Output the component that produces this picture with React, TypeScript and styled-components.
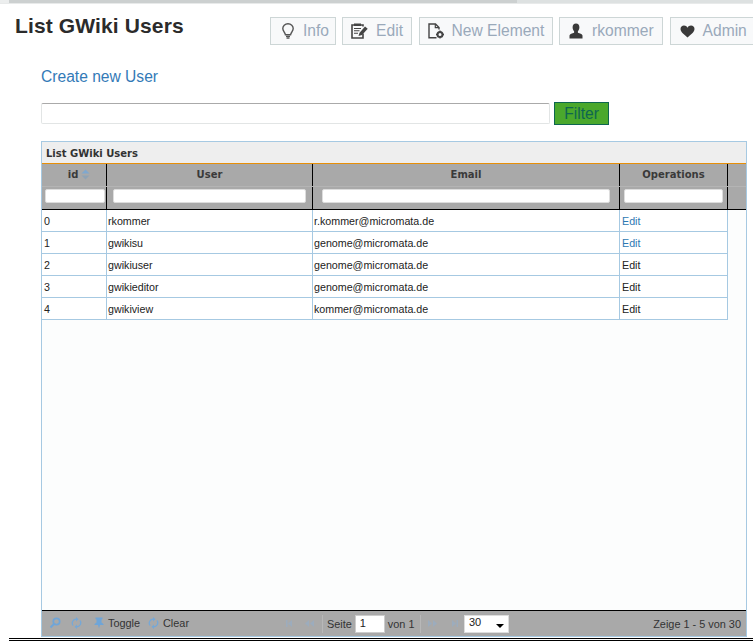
import styled, { createGlobalStyle } from "styled-components";
import { ReactNode } from "react";

const GlobalStyle = createGlobalStyle`
  html, body {
    margin: 0;
    padding: 0;
    background: #fff;
    font-family: "Liberation Sans", Arial, sans-serif;
    overflow: hidden;
  }
`;

const Page = styled.div`
  width: 753px;
  height: 641px;
  overflow: hidden;
  display: flex;
  flex-direction: column;
`;

const TopStrip = styled.div`
  height: 4px;
  box-sizing: border-box;
  flex: none;
  border-bottom: 1px solid #e8eaea;
  background: linear-gradient(
    to right,
    #eceeee 0,
    #eceeee 9px,
    #ccd0d0 9px,
    #ccd0d0 517px,
    #dde1e1 517px
  );
`;

const Header = styled.div`
  display: flex;
  justify-content: space-between;
  height: 27px;
  padding: 13px 0 0 15px;
  flex: none;
`;

const Title = styled.h1`
  margin: 0;
  font-size: 21px;
  line-height: 18px;
  font-weight: 700;
  letter-spacing: 0.13px;
  color: #2b2b2b;
  white-space: nowrap;
`;

const Nav = styled.div`
  display: flex;
  gap: 6.5px;
  width: 483px;
  flex: none;
`;

const NavButton = styled.a<{ $w: number; $pad: number }>`
  box-sizing: border-box;
  width: ${(p) => p.$w}px;
  height: 28px;
  flex: none;
  display: flex;
  align-items: center;
  gap: 8px;
  padding-left: ${(p) => p.$pad}px;
  background: #f8f9fa;
  border: 1px solid #cdd6d6;
  color: #9aa9ba;
  font-size: 15.6px;
  white-space: nowrap;
`;

const Content = styled.div`
  display: flex;
  flex-direction: column;
  padding: 24px 6px 0 41px;
  flex: 1;
  min-height: 0;
`;

const CreateLink = styled.a`
  font-size: 15.6px;
  line-height: 18px;
  color: #337ab7;
`;

const FilterRow = styled.div`
  display: flex;
  align-items: center;
  gap: 4px;
  margin-top: 16px;
  height: 23px;
`;

const FilterInput = styled.input`
  box-sizing: border-box;
  width: 509px;
  height: 21px;
  margin: 0;
  background: #fff;
  border: 1px solid #e2e5e5;
  border-top-color: #aaa;
  border-radius: 2px;
`;

const FilterButton = styled.button`
  box-sizing: border-box;
  width: 55px;
  height: 23px;
  padding: 0;
  background: #4aa82c;
  border: 1px solid #0e6650;
  color: #0e6650;
  font-family: "Liberation Sans", Arial, sans-serif;
  font-size: 15.6px;
`;

const Grid = styled.div`
  box-sizing: border-box;
  height: 496px;
  margin-top: 16px;
  display: flex;
  flex-direction: column;
  border: 1px solid #a6c9e2;
  background: #fcfdfd;
`;

const Caption = styled.div`
  height: 22px;
  flex: none;
  box-sizing: border-box;
  padding: 5px 0 0 4px;
  background: #eee;
  border-bottom: 1px solid #e78f08;
  font-family: "DejaVu Sans", Verdana, sans-serif;
  font-size: 10px;
  font-weight: 700;
  line-height: 13px;
  color: #333;
`;

const HeadBlock = styled.div`
  flex: none;
  background: #a9a9a9;
  border-bottom: 1px solid #000;
`;

const HeadRow = styled.div<{ $h: number; $rule?: boolean }>`
  display: grid;
  grid-template-columns: 65px 206px 307px 108px 1fr;
  height: ${(p) => p.$h}px;
  box-sizing: border-box;
  border-bottom: ${(p) => (p.$rule ? "1px solid #b4b4b4" : "0")};
`;

const HeadCell = styled.div<{ $offset?: number }>`
  box-sizing: border-box;
  display: flex;
  align-items: center;
  justify-content: center;
  gap: 3px;
  border-right: 1px solid #000;
  font-family: "DejaVu Sans", Verdana, sans-serif;
  font-size: 10px;
  font-weight: 700;
  color: #3a3a3a;
  padding: 0 0 1px ${(p) => p.$offset ?? 0}px;

  &:last-child {
    border-right: 0;
  }
`;

const FilterCell = styled.div<{ $left: number; $right: number }>`
  box-sizing: border-box;
  display: flex;
  align-items: center;
  border-right: 1px solid #000;
  padding: 0 ${(p) => p.$right}px 4px ${(p) => p.$left}px;

  &:last-child {
    border-right: 0;
  }
`;

const SearchBox = styled.input`
  box-sizing: border-box;
  display: block;
  width: 100%;
  height: 14px;
  margin: 0;
  padding: 0;
  background: #fff;
  border: 1px solid #ddd;
  border-radius: 2px;
`;

const Body = styled.div`
  flex: 1;
  min-height: 0;
`;

const Row = styled.div`
  display: grid;
  grid-template-columns: 65px 206px 307px 107px;
  width: 686px;
  height: 22px;
  box-sizing: border-box;
  background: #fff;
  border-bottom: 1px solid #a6c9e2;
  border-right: 1px solid #a6c9e2;
`;

const Cell = styled.div<{ $pad: number }>`
  box-sizing: border-box;
  padding: 2px 0 0 ${(p) => p.$pad}px;
  border-right: 1px solid #a6c9e2;
  font-size: 10.7px;
  line-height: 18px;
  color: #222;
  white-space: nowrap;

  &:last-child {
    border-right: 0;
  }
`;

const EditLink = styled.a<{ $linked: boolean }>`
  color: ${(p) => (p.$linked ? "#2e78b2" : "#222")};
`;

const Pager = styled.div`
  flex: none;
  height: 26px;
  box-sizing: border-box;
  display: grid;
  grid-template-columns: 240px 1fr 150px;
  align-items: center;
  background: #a9a9a9;
  border-top: 1px solid #000;
  font-size: 10.9px;
  color: #333;
`;

const PagerLeft = styled.div`
  display: flex;
  align-items: center;
  padding: 0 0 2px 7px;
`;

const ToolItem = styled.span<{ $w: number }>`
  width: ${(p) => p.$w}px;
  display: flex;
  align-items: center;
  gap: 4px;
  flex: none;
`;

const PagerCenter = styled.div`
  display: flex;
  align-items: center;
  margin-left: -0.5px;
`;

const Divider = styled.span`
  width: 1px;
  height: 18px;
  background: #b8b8b8;
  margin: 0 1px 0 2.5px;
`;

const PageLabel = styled.span`
  margin: 0 3px;
`;

const PageInput = styled.div`
  box-sizing: border-box;
  width: 30px;
  height: 18px;
  padding: 1px 0 0 4px;
  background: #fff;
  border: 1px solid #ccc;
  font-size: 11px;
  color: #222;
`;

const SizeSelect = styled.div`
  box-sizing: border-box;
  position: relative;
  width: 45px;
  height: 18px;
  padding: 0 0 0 4px;
  background: #fff;
  border: 1px solid #ddd;
  font-size: 11px;
  line-height: 12px;
  color: #222;
`;

const SelectArrow = styled.span`
  position: absolute;
  right: 4px;
  top: 8px;
  border-left: 4px solid transparent;
  border-right: 4px solid transparent;
  border-top: 4px solid #000;
`;

const PagerRight = styled.div`
  text-align: right;
  padding-right: 5px;
`;

const BottomRules = styled.div`
  flex: none;
  height: 3px;
  margin-left: 9px;
  box-sizing: border-box;
  border-top: 1px solid #000;
  border-bottom: 1px solid #000;
`;

const SeekSvg = styled.svg<{ $m: number; $flip: boolean }>`
  flex: none;
  margin: 0 ${(p) => p.$m}px;
  transform: ${(p) => (p.$flip ? "scaleX(-1)" : "none")};
`;

const Svg = ({ w, h, children }: { w: number; h: number; children: ReactNode }) => (
  <svg width={w} height={h} viewBox={`0 0 ${w} ${h}`} style={{ flex: "none" }}>
    {children}
  </svg>
);

const BulbIcon = () => (
  <Svg w={14} h={16}>
    <path
      d="M7 .8C3.900.8 1.800 3 1.800 5.600c0 2.500 2 3.600 2.600 6.100h5.200c.6-2.500 2.600-3.600 2.600-6.100C12.200 3 10.100.8 7 .8z"
      fill="none"
      stroke="#555"
      strokeWidth="1.4"
    />
    <path d="M5 13.300h4M5.500 15h3" stroke="#555" strokeWidth="1.300" />
  </Svg>
);

const EditIcon = () => (
  <Svg w={17} h={16}>
    <path d="M12 10.500v4.500H1V2h11v1.500" fill="none" stroke="#444" strokeWidth="1.600" />
    <path d="M3 .5h7V3H3z" fill="#444" />
    <path d="M3 5.500h7M3 7.800h5.500M3 10.200h4" stroke="#444" strokeWidth="1.100" />
    <path d="M7.500 13l.9-3.100L14 3.500l2.700 2.300-5.700 6.200z" fill="#444" />
  </Svg>
);

const NewElementIcon = () => (
  <Svg w={16} h={16}>
    <path d="M8.500 14.800H1V1h6.500L11 4.500v2" fill="none" stroke="#444" strokeWidth="1.400" />
    <path d="M7.300 1v3.600H11" fill="none" stroke="#444" strokeWidth="1.200" />
    <circle cx="12" cy="11.500" r="2.500" fill="none" stroke="#444" strokeWidth="2" />
    <path d="M12 7.500v1M12 14.500v1M8 11.500h1M15 11.500h1" stroke="#444" strokeWidth="1.300" />
  </Svg>
);

const UserIcon = () => (
  <Svg w={15} h={16}>
    <path
      d="M7 0.500c2.200 0 3.400 1.700 3.400 3.800 0 1.700-.7 3.200-1.500 4v1.400c1.800.6 4.400 1.400 4.600 2.800v3H.5v-3c.2-1.400 2.800-2.200 4.600-2.800V8.300c-.8-.8-1.500-2.300-1.500-4C3.600 2.200 4.800.5 7 .5z"
      fill="#3a3a3a"
    />
  </Svg>
);

const HeartIcon = () => (
  <Svg w={15} h={13}>
    <path
      d="M7.500 12.500C5.500 10.500.5 7.500.5 4 .5 2 2 .5 4 .5c1.500 0 2.800.8 3.500 2.200C8.200 1.300 9.500.5 11 .5c2 0 3.500 1.500 3.500 3.500 0 3.500-5 6.500-7 8.500z"
      fill="#3a3a3a"
    />
  </Svg>
);

const SortIcon = () => (
  <Svg w={9} h={11}>
    <path d="M4.500 0.500L8.500 4.500H.5z" fill="#7fa8cf" />
    <path d="M4.500 10.500L8.500 6.500H.5z" fill="#8fa3b5" />
  </Svg>
);

const SearchIcon = () => (
  <Svg w={12} h={12}>
    <circle cx="7.500" cy="4.500" r="3.200" fill="none" stroke="#6fa5d8" strokeWidth="1.700" />
    <path d="M5 7L1.500 10.500" stroke="#6fa5d8" strokeWidth="2" />
  </Svg>
);

const RefreshIcon = () => (
  <Svg w={11} h={12}>
    <path
      d="M2 8.500A4 4 0 0 1 5.500 2.200M9 3.500A4 4 0 0 1 5.500 9.800"
      fill="none"
      stroke="#75a8d8"
      strokeWidth="1.300"
    />
    <path d="M5 0v4.500L7.500 2.200zM6 12V7.500L3.500 9.800z" fill="#75a8d8" />
  </Svg>
);

const PinIcon = () => (
  <Svg w={10} h={12}>
    <path d="M1.500 0.500h7v1.500L7.500 2.500v3l2 1.500v1h-3.500L5 11.500 4 8H.5V7l2-1.500v-3L1.500 2z" fill="#6fa5d8" />
  </Svg>
);

const SeekIcon = ({ flip, end, m }: { flip: boolean; end: boolean; m: number }) => (
  <SeekSvg width="10" height="7" viewBox="0 0 10 7" $m={m} $flip={flip}>
    {end ? (
      <path d="M0 0h1.500v7H0zM6 0v7L2 3.500z" fill="#9cacbd" />
    ) : (
      <path d="M4 0v7L0 3.500zM9 0v7L5 3.500z" fill="#9cacbd" />
    )}
  </SeekSvg>
);

const navItems = [
  { label: "Info", w: 65.6, pad: 10, icon: <BulbIcon /> },
  { label: "Edit", w: 70, pad: 8, icon: <EditIcon /> },
  { label: "New Element", w: 134, pad: 8, icon: <NewElementIcon /> },
  { label: "rkommer", w: 104, pad: 9, icon: <UserIcon /> },
  { label: "Admin", w: 90, pad: 9, icon: <HeartIcon /> },
];

const users = [
  { id: 0, user: "rkommer", email: "r.kommer@micromata.de", linked: true },
  { id: 1, user: "gwikisu", email: "genome@micromata.de", linked: true },
  { id: 2, user: "gwikiuser", email: "genome@micromata.de", linked: false },
  { id: 3, user: "gwikieditor", email: "genome@micromata.de", linked: false },
  { id: 4, user: "gwikiview", email: "kommer@micromata.de", linked: false },
];

const filterCells = [
  { left: 3, right: 1 },
  { left: 6, right: 6 },
  { left: 9, right: 9 },
  { left: 4, right: 4 },
];

export default function App() {
  return (
    <Page>
      <GlobalStyle />
      <TopStrip />
      <Header>
        <Title>List GWiki Users</Title>
        <Nav>
          {navItems.map((n) => (
            <NavButton key={n.label} $w={n.w} $pad={n.pad}>
              {n.icon}
              {n.label}
            </NavButton>
          ))}
        </Nav>
      </Header>
      <Content>
        <CreateLink>Create new User</CreateLink>
        <FilterRow>
          <FilterInput />
          <FilterButton>Filter</FilterButton>
        </FilterRow>
        <Grid>
          <Caption>List GWiki Users</Caption>
          <HeadBlock>
            <HeadRow $h={23} $rule>
              <HeadCell $offset={10}>
                id <SortIcon />
              </HeadCell>
              <HeadCell>User</HeadCell>
              <HeadCell>Email</HeadCell>
              <HeadCell>Operations</HeadCell>
              <HeadCell />
            </HeadRow>
            <HeadRow $h={22}>
              {filterCells.map((c) => (
                <FilterCell key={c.left} $left={c.left} $right={c.right}>
                  <SearchBox />
                </FilterCell>
              ))}
              <HeadCell />
            </HeadRow>
          </HeadBlock>
          <Body>
            {users.map((u) => (
              <Row key={u.id}>
                <Cell $pad={2}>{u.id}</Cell>
                <Cell $pad={1}>{u.user}</Cell>
                <Cell $pad={1}>{u.email}</Cell>
                <Cell $pad={2}>
                  <EditLink $linked={u.linked}>Edit</EditLink>
                </Cell>
              </Row>
            ))}
          </Body>
          <Pager>
            <PagerLeft>
              <ToolItem $w={22}>
                <SearchIcon />
              </ToolItem>
              <ToolItem $w={23}>
                <RefreshIcon />
              </ToolItem>
              <ToolItem $w={54}>
                <PinIcon /> Toggle
              </ToolItem>
              <ToolItem $w={50}>
                <RefreshIcon /> Clear
              </ToolItem>
            </PagerLeft>
            <PagerCenter>
              <SeekIcon flip={false} end m={4.5} />
              <SeekIcon flip={false} end={false} m={4.5} />
              <Divider />
              <PageLabel>Seite</PageLabel>
              <PageInput>1</PageInput>
              <PageLabel>von 1</PageLabel>
              <Divider />
              <SeekIcon flip end={false} m={5.5} />
              <SeekIcon flip end m={5.5} />
              <SizeSelect>
                30
                <SelectArrow />
              </SizeSelect>
            </PagerCenter>
            <PagerRight>Zeige 1 - 5 von 30</PagerRight>
          </Pager>
        </Grid>
      </Content>
      <BottomRules />
    </Page>
  );
}
